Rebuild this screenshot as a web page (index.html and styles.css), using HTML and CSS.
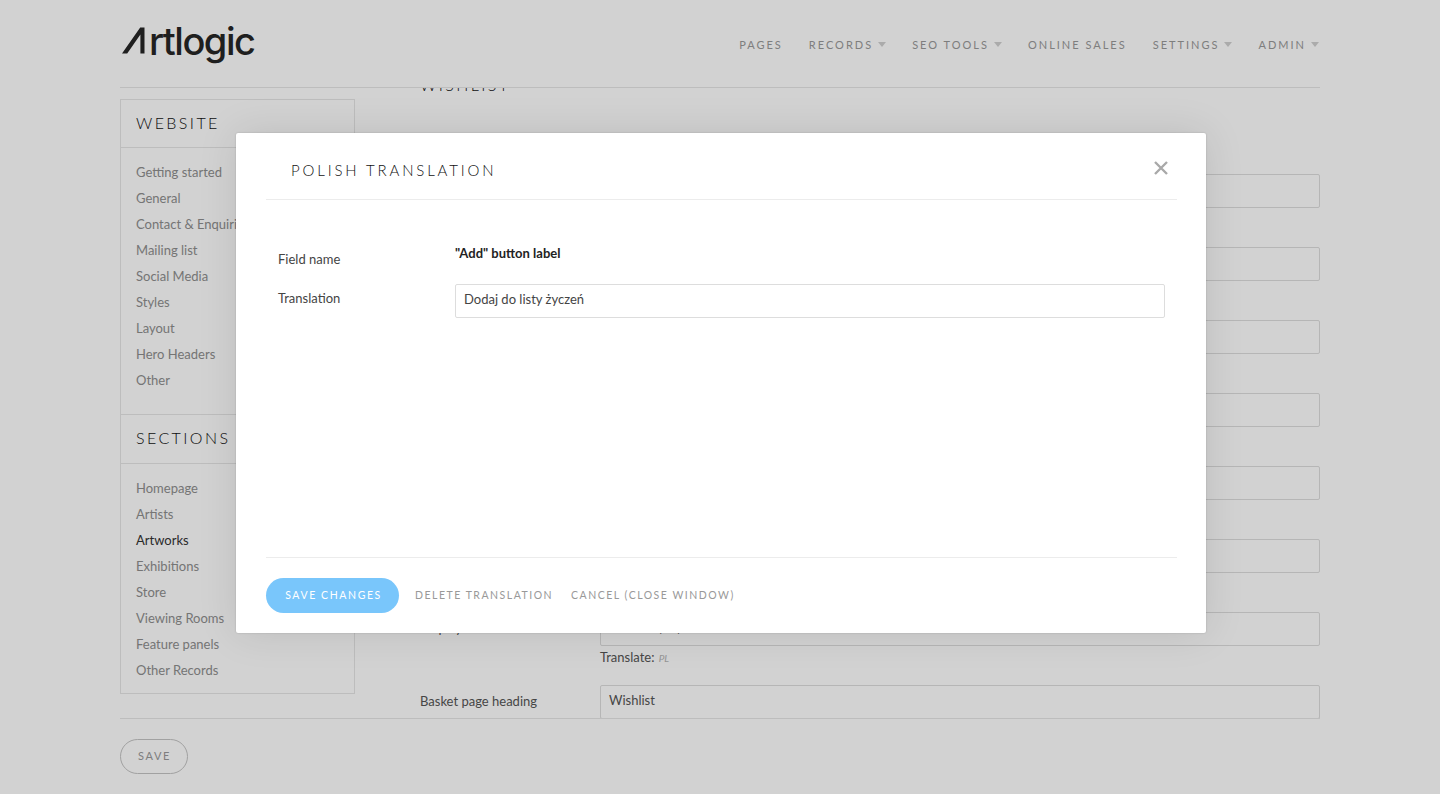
FILE: index.html
```html
<!DOCTYPE html>
<html lang="en">
<head>
  <meta charset="UTF-8">
  <title>Artlogic - Polish translation</title>
  <link rel="stylesheet" href="styles.css">
</head>
<body>
  <div class="page">
    <header class="top">
      <a class="logo">
        <svg class="logo-a" width="27" height="27" viewBox="0 0 27 27">
          <path d="M0 26.500 L18.200 0.500 H22.500 V26.500 H18.400 V7.500 L5.200 26.500 Z" fill="#262626"/>
        </svg>
        <span>rtlogic</span>
      </a>
      <nav class="nav">
        <a>PAGES</a>
        <a class="has-menu">RECORDS</a>
        <a class="has-menu">SEO TOOLS</a>
        <a>ONLINE SALES</a>
        <a class="has-menu">SETTINGS</a>
        <a class="has-menu">ADMIN</a>
      </nav>
    </header>

    <div class="middle">
      <aside class="sidebar">
        <h2>WEBSITE</h2>
        <ul>
          <li>Getting started</li>
          <li>General</li>
          <li>Contact &amp; Enquiries</li>
          <li>Mailing list</li>
          <li>Social Media</li>
          <li>Styles</li>
          <li>Layout</li>
          <li>Hero Headers</li>
          <li>Other</li>
        </ul>
        <h2 class="second">SECTIONS</h2>
        <ul>
          <li>Homepage</li>
          <li>Artists</li>
          <li class="active">Artworks</li>
          <li>Exhibitions</li>
          <li>Store</li>
          <li>Viewing Rooms</li>
          <li>Feature panels</li>
          <li>Other Records</li>
        </ul>
      </aside>

      <main class="form">
        <h3>WISHLIST</h3>
        <div class="row"><label></label><div class="field"></div></div>
        <div class="row"><label></label><div class="field"></div></div>
        <div class="row"><label></label><div class="field"></div></div>
        <div class="row"><label></label><div class="field"></div></div>
        <div class="row"><label></label><div class="field"></div></div>
        <div class="row"><label></label><div class="field"></div></div>
        <div class="row"><label>Display label</label><div class="field">Wishlist (%s)</div></div>
        <div class="translate">Translate: <i>PL</i></div>
        <div class="row last"><label>Basket page heading</label><div class="field">Wishlist</div></div>
      </main>
    </div>

    <footer class="bottom">
      <button class="save">SAVE</button>
    </footer>
  </div>

  <div class="overlay"></div>

  <div class="modal">
    <div class="modal-head">
      <h1>POLISH TRANSLATION</h1>
      <svg class="close" width="16" height="16" viewBox="0 0 16 16">
        <path d="M2 2 L14 14 M14 2 L2 14" stroke="#a9a9a9" stroke-width="2.400" fill="none"/>
      </svg>
    </div>
    <div class="modal-body">
      <div class="modal-row name">
        <label>Field name</label>
        <strong>"Add" button label</strong>
      </div>
      <div class="modal-row">
        <label>Translation</label>
        <div class="modal-input">Dodaj do listy życzeń</div>
      </div>
    </div>
    <div class="modal-foot">
      <button class="save-changes">SAVE CHANGES</button>
      <a>DELETE TRANSLATION</a>
      <a>CANCEL (CLOSE WINDOW)</a>
    </div>
  </div>
</body>
</html>
```

FILE: styles.css
```css
* {
  margin: 0;
  padding: 0;
  box-sizing: border-box;
}

body {
  font-family: 'Lato', 'Liberation Sans', sans-serif;
  background-color: #fff;
  color: #333;
  height: 794px;
  overflow: hidden;
}

.page {
  width: 1200px;
  margin: 0 auto;
  height: 794px;
  display: flex;
  flex-direction: column;
}

/* header */
.top {
  height: 88px;
  flex: none;
  display: flex;
  justify-content: space-between;
  align-items: flex-start;
  border-bottom: 1px solid #e6e6e6;
}

.logo {
  display: flex;
  align-items: baseline;
  margin: 16px 0 0 2px;
  font-family: 'Inter', sans-serif;
  font-size: 38px;
  font-weight: 500;
  letter-spacing: -1.500px;
  line-height: 50px;
  color: #262626;
}

.logo-a {
  align-self: center;
  margin-top: -2px;
}

.nav {
  display: flex;
  gap: 26px;
  margin: 38px 1px 0 0;
  font-size: 11px;
  letter-spacing: 2px;
  line-height: 14px;
  color: #999;
}

.has-menu::after {
  content: "";
  display: inline-block;
  margin: 0 0 2px 5px;
  border-left: 4.500px solid transparent;
  border-right: 4.500px solid transparent;
  border-top: 5px solid #d0d0d0;
}

/* middle part, scrolled */
.middle {
  flex: none;
  height: 631px;
  overflow: hidden;
  display: flex;
  align-items: flex-start;
  border-bottom: 1px solid #e6e6e6;
}

.sidebar {
  width: 235px;
  flex: none;
  margin-top: 11px;
  height: 595px;
  border: 1px solid #e6e6e6;
}

.sidebar h2 {
  font-size: 16px;
  font-weight: 300;
  letter-spacing: 2.400px;
  line-height: 20px;
  color: #111;
  padding: 13px 15px 14px;
  border-bottom: 1px solid #e6e6e6;
}

.sidebar h2.second {
  padding-bottom: 15px;
  border-top: 1px solid #e6e6e6;
}

.sidebar ul {
  list-style: none;
  padding: 11px 15px 21px;
}

.sidebar li {
  font-size: 13px;
  line-height: 26px;
  color: #8e8e8e;
  white-space: nowrap;
}

.sidebar li.active {
  color: #333;
}

.form {
  flex: 1;
  padding-left: 65px;
  margin-top: -13px;
}

.form h3 {
  font-size: 16px;
  font-weight: 300;
  letter-spacing: 2.400px;
  line-height: 20px;
  color: #111;
  margin-bottom: 79px;
}

.row {
  display: flex;
  height: 34px;
  margin-bottom: 39px;
}

.row label {
  width: 180px;
  flex: none;
  font-size: 13px;
  line-height: 33px;
  color: #555;
}

.field {
  flex: 1;
  height: 34px;
  border: 1px solid #ddd;
  border-radius: 2px;
  padding: 0 8px;
  font-size: 13px;
  line-height: 29px;
  color: #555;
}

.translate {
  margin: -36px 0 19px 180px;
  height: 17px;
  font-size: 13px;
  line-height: 17px;
  color: #555;
}

.translate i {
  font-size: 10px;
  color: #b5b5b5;
  margin-left: 1px;
}

/* save button */
.bottom {
  padding-top: 20px;
}

.save {
  width: 68px;
  height: 35px;
  padding: 0 0 2px 1px;
  border: 1px solid #c4c4c4;
  border-radius: 18px;
  background: #fff;
  font-family: inherit;
  font-size: 11px;
  letter-spacing: 1.600px;
  color: #999;
}

/* dialog */
.overlay {
  position: absolute;
  inset: 0;
  background-color: rgba(0, 0, 0, 0.175);
}

.modal {
  position: absolute;
  left: 236px;
  top: 133px;
  width: 970px;
  height: 500px;
  background-color: #fff;
  border-radius: 2px;
  padding: 0 29px 0 30px;
  display: flex;
  flex-direction: column;
  box-shadow: 0 0 40px rgba(0, 0, 0, 0.1), 0 0 2px rgba(0, 0, 0, 0.2);
}

.modal-head {
  height: 67px;
  flex: none;
  display: flex;
  justify-content: space-between;
  align-items: flex-start;
  border-bottom: 1px solid #ececec;
}

.modal-head h1 {
  font-size: 15px;
  font-weight: 300;
  letter-spacing: 2.850px;
  line-height: 20px;
  color: #111;
  margin: 27px 0 0 25px;
}

.close {
  margin: 27px 8px 0 0;
}

.modal-body {
  flex: 1;
  padding: 40px 12px 0;
}

.modal-row {
  display: flex;
  align-items: center;
  height: 34px;
}

.modal-row.name {
  height: 44px;
  align-items: flex-start;
}

.modal-row label {
  width: 177px;
  flex: none;
  font-size: 13px;
  line-height: 18px;
  color: #444;
  margin-top: -7px;
}

.modal-row.name label {
  margin-top: 10px;
}

.modal-row strong {
  font-size: 13px;
  line-height: 26px;
  color: #222;
}

.modal-input {
  flex: 1;
  height: 34px;
  border: 1px solid #ddd;
  border-radius: 2px;
  padding: 0 8px;
  font-size: 13px;
  line-height: 29px;
  color: #444;
}

.modal-foot {
  height: 76px;
  flex: none;
  border-top: 1px solid #ececec;
  display: flex;
  align-items: flex-start;
  padding-top: 20px;
  font-size: 10.500px;
  letter-spacing: 1.500px;
  color: #999;
}

.modal-foot a {
  line-height: 35px;
  margin-right: 18px;
  white-space: nowrap;
}

.save-changes {
  width: 133px;
  height: 35px;
  padding: 0 0 1px 2px;
  border: none;
  border-radius: 18px;
  background-color: #79c6fb;
  color: #fff;
  font-family: inherit;
  font-size: 10.500px;
  letter-spacing: 1.600px;
  margin-right: 16px;
}
```
